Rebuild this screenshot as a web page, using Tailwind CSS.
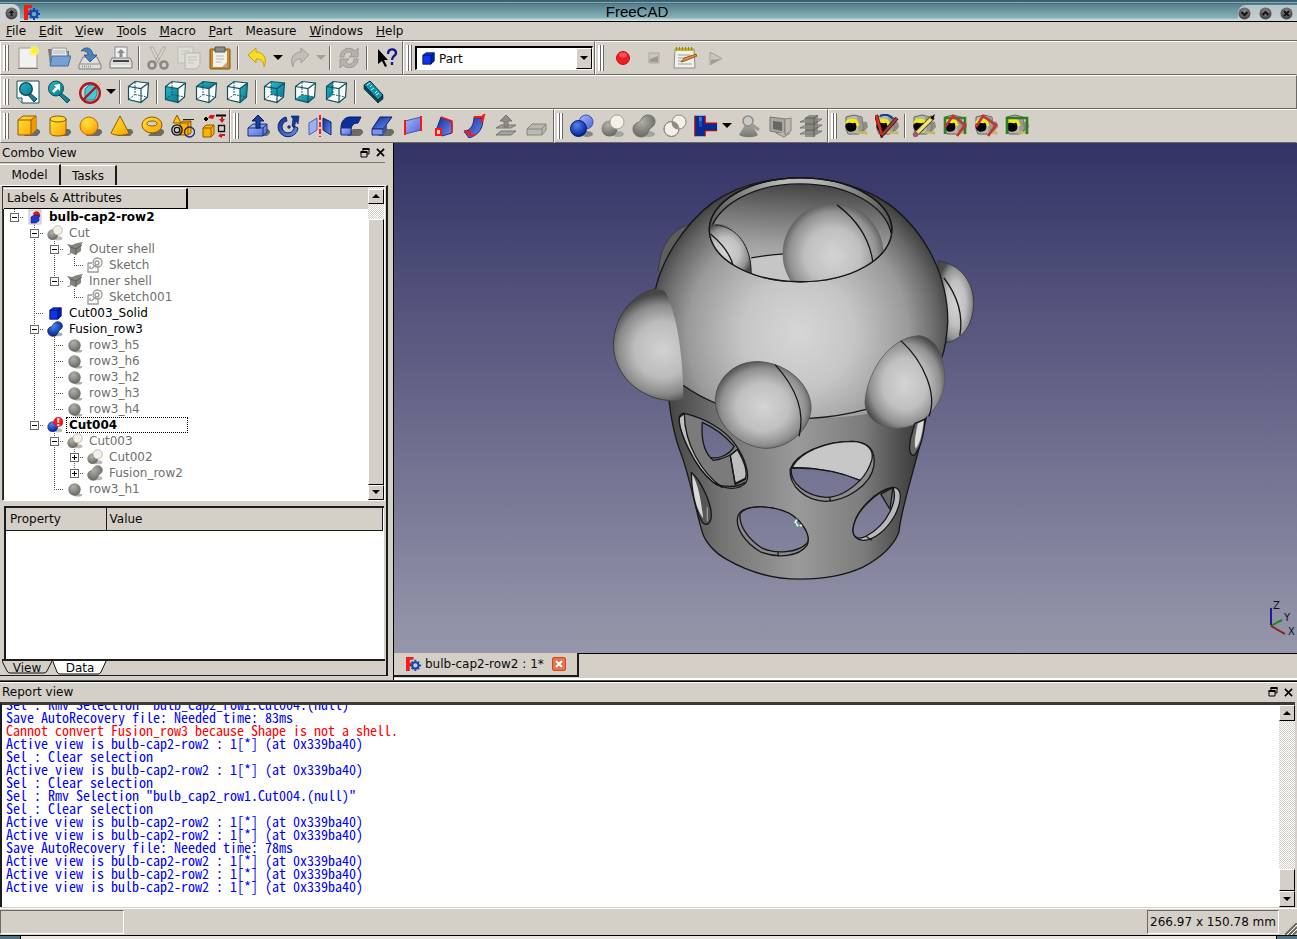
<!DOCTYPE html>
<html lang="en">
<head>
<meta charset="utf-8">
<title>FreeCAD</title>
<script src="https://cdn.jsdelivr.net/npm/@tailwindcss/browser@4"></script>
</head>
<body class="flex h-screen flex-col overflow-hidden bg-[#d4d0c8] font-['DejaVu_Sans',sans-serif] text-[12px] leading-4 text-[#0a0a0a]">

<svg class="absolute size-0" aria-hidden="true">
  <defs>
    <linearGradient id="gY" x1="0" y1="0" x2="1" y2="1"><stop offset="0" stop-color="#ffe43a"/><stop offset="1" stop-color="#ffa000"/></linearGradient>
    <linearGradient id="gT" x1="0" y1="0" x2="1" y2="1"><stop offset="0" stop-color="#2cb5c6"/><stop offset="1" stop-color="#077a90"/></linearGradient>
    <linearGradient id="gB" x1="0" y1="0" x2="1" y2="1"><stop offset="0" stop-color="#0d2a9a"/><stop offset="1" stop-color="#6f8ff0"/></linearGradient>
    <linearGradient id="gL" x1="0" y1="0" x2="1" y2="1"><stop offset="0" stop-color="#a9baf8"/><stop offset="1" stop-color="#4a66dc"/></linearGradient>
    <linearGradient id="gG" x1="0" y1="0" x2="0" y2="1"><stop offset="0" stop-color="#aaa9a4"/><stop offset="1" stop-color="#777670"/></linearGradient>
    <radialGradient id="rB" cx=".4" cy=".3" r=".7"><stop offset="0" stop-color="#4f86ee"/><stop offset="1" stop-color="#04208f"/></radialGradient>
    <radialGradient id="rG" cx=".4" cy=".3" r=".7"><stop offset="0" stop-color="#b2b0aa"/><stop offset="1" stop-color="#696863"/></radialGradient>
    <radialGradient id="rY" cx=".4" cy=".3" r=".7"><stop offset="0" stop-color="#ffe640"/><stop offset="1" stop-color="#ff9d00"/></radialGradient>
    <radialGradient id="rW" cx=".5" cy=".35" r=".6"><stop offset="0" stop-color="#8d8d8d"/><stop offset="1" stop-color="#454545"/></radialGradient>
  </defs>
  <symbol id="logo" viewBox="0 0 16 16"><path d="M0 0h8v3H4v3h3v3H4v6H0z" fill="#fb1a10"/><g fill="none" stroke="#0f46b8"><circle cx="10" cy="9" r="3.4" stroke-width="2.2"/><path d="M10 3v2M10 13v2M4 9h2M14 9h2M6 5l1 1M13 12l1 1M14 5l-1 1M7 12l-1 1" stroke-width="2"/></g></symbol>
  <symbol id="new" viewBox="0 0 24 24"><path d="M3 2h18v20H3z" fill="#f1f1ef" stroke="#9b9a96"/><path d="M2 22.500h20" stroke="#777"/><circle cx="18" cy="5" r="5" fill="#fbf27a" opacity=".8"/><circle cx="18" cy="5" r="2.500" fill="#fff700"/></symbol>
  <symbol id="open" viewBox="0 0 24 24"><path d="M1 3h9l1 2h11v14H3z" fill="#777875"/><path d="M5 2h14l2 10H4z" fill="#e9e9e7" stroke="#9a9a98"/><path d="M6 5h12M6 7h12" stroke="#b7b7b5"/><path d="M5 10h19l-3 10H3z" fill="#78a0d2" stroke="#3f6ba8"/></symbol>
  <symbol id="save" viewBox="0 0 24 24"><path d="M5 11h14l4 8v4H1v-4z" fill="#dedede" stroke="#7c7c7c"/><path d="M1.500 18h21" stroke="#8c8c8c"/><path d="M4 20.500h9" stroke="#999" stroke-width="2" stroke-dasharray="1 1"/><path d="M3 5c4-5 11-4 12 4h4l-7 7-6-7h4c0-3-3-5-7-4z" fill="#4d82b4" stroke="#2f608f"/></symbol>
  <symbol id="print" viewBox="0 0 24 24"><path d="M6 1h12v12H6z" fill="#f2f2f2" stroke="#8a8a8a"/><path d="M12 3l4 4h-2.500v4h-3V7H8z" fill="#8c8c8c"/><path d="M3 12h18l2 4v6H1v-6z" fill="#dadada" stroke="#7a7a7a"/><path d="M4 15h16" stroke="#444" stroke-width="2"/><path d="M2 20h20" stroke="#fff"/></symbol>
  <symbol id="cut" viewBox="0 0 24 24"><path d="M4 1l3 0 8 16-3 0zM20 1l-3 0-9 16 3 0z" fill="#d6d5d0" stroke="#a3a29c" stroke-width=".8"/><g fill="none" stroke="#8a8984" stroke-width="2.600"><circle cx="6" cy="19" r="3.500"/><circle cx="18" cy="19" r="3.500"/></g></symbol>
  <symbol id="copy" viewBox="0 0 24 24" opacity=".6"><path d="M1 1h15v16H1z" fill="#e6e5e1" stroke="#b1b0ab"/><path d="M8 7h15v12l-4 4H8z" fill="#e9e8e5" stroke="#a3a29e"/><path d="M11 11h9M11 14h9M11 17h6M4 5h9M4 8h4" stroke="#b8b7b2"/></symbol>
  <symbol id="paste" viewBox="0 0 24 24"><rect x="2" y="3" width="20" height="20" rx="1" fill="#c98a2b" stroke="#83540f"/><path d="M5 5h14v16H5z" fill="#f0f0ee"/><path d="M7 1h10v5H7z" fill="#8b8d89" stroke="#555"/><path d="M8 10h8M8 13h8M8 16h5" stroke="#b9b9b7"/><path d="M19 16l-5 5h5z" fill="#aaa"/></symbol>
  <symbol id="undo" viewBox="0 0 24 24"><path d="M3 9l8-7v4c7 0 12 6 8 15 0-6-3-8-8-8v4z" fill="#f6dc2b" stroke="#caa300"/></symbol>
  <symbol id="redo" viewBox="0 0 24 24"><path d="M21 9l-8-7v4C6 6 1 12 5 21c0-6 3-8 8-8v4z" fill="#c0bfba" stroke="#9f9e99"/></symbol>
  <symbol id="refresh" viewBox="0 0 24 24" opacity=".65"><path d="M3 11c0-9 11-11 15-6l3-3v9h-9l3-3c-3-4-8-2-8 3zM21 13c0 9-11 11-15 6l-3 3v-9h9l-3 3c3 4 8 2 8-3z" fill="#a5a49f" stroke="#7f7e79"/></symbol>
  <symbol id="help" viewBox="0 0 24 24"><path d="M4 3v15l4-3 3 6 2-1-3-6h4z" fill="#000"/><path d="M14 8c0-6 8-6 8-1 0 3-4 3-4 7M18 16v3" fill="none" stroke="#14148c" stroke-width="2.400"/></symbol>
  <symbol id="part" viewBox="0 0 16 16"><path d="M1 4l4-3h10v10l-4 4H1z" fill="#0a34f0" stroke="#000a50"/><path d="M11 4v11l4-4V1z" fill="#001fb0"/><path d="M1 4h10l4-3M11 4v11" fill="none" stroke="#000a50"/></symbol>
  <symbol id="rec" viewBox="0 0 24 24"><circle cx="12" cy="12" r="6.500" fill="#ee1c20" stroke="#c81010"/><ellipse cx="12" cy="9" rx="4" ry="2.500" fill="#ff7a78" opacity=".6"/></symbol>
  <symbol id="stop" viewBox="0 0 24 24"><path d="M7 7h10v10H7z" fill="#c9c6bf" stroke="#aaa8a2"/><path d="M8 13l8-3v6H8z" fill="#9b9994"/></symbol>
  <symbol id="edit" viewBox="0 0 24 24"><path d="M2 3h19l1 19H1z" fill="#f0f0ec" stroke="#8d8d8a"/><path d="M2 2h19v3H2z" fill="#c5b52c"/><path d="M3 2.500h18" stroke="#8e8224" stroke-width="3" stroke-dasharray="1 2"/><path d="M5 9h12M5 12h10M5 15h5M5 18h14" stroke="#9e9e9e"/><path d="M8 16l3-4 12-4 1 2-12 5z" fill="#e88b2a" stroke="#6d3d10" stroke-width=".7"/></symbol>
  <symbol id="play" viewBox="0 0 24 24"><path d="M6 6l12 6.500L6 19z" fill="#c9c6bf" stroke="#a3a19b"/><path d="M7 14l9-1-9 5z" fill="#9b9994"/></symbol>

  <symbol id="fit" viewBox="0 0 24 24"><path d="M1 1h22v22H6l-5-5z" fill="#fff" stroke="#11505c"/><path d="M1 18h5v5" fill="#d7e4e6" stroke="#11505c"/><path d="M14 13l7 6-3 3-6-7z" fill="#1a8296" stroke="#0c4652"/><circle cx="10" cy="9" r="6.300" fill="url(#gT)" stroke="#0c4652" stroke-width="1.300"/></symbol>
  <symbol id="fitsel" viewBox="0 0 24 24"><path d="M14 13l9 7-3 3-8-8z" fill="#1a8296" stroke="#0c4652"/><circle cx="9" cy="8.500" r="7.500" fill="url(#gT)" stroke="#0c4652"/><path d="M13 4v7l-2-2-4 4-2-2 4-4-2-2z" fill="#fff"/></symbol>
  <symbol id="nodraw" viewBox="0 0 24 24"><path d="M7 9l4-4h8v10l-3 5H7z" fill="#41cdd8" stroke="#16808c"/><path d="M18 4l3-3M20 7l3-4" stroke="#e0b040"/><circle cx="12" cy="13" r="9.800" fill="none" stroke="#b41620" stroke-width="2.400"/><path d="M5 20L19 6" stroke="#b41620" stroke-width="2.400"/></symbol>
  <symbol id="cube" viewBox="0 0 24 24"><path d="M1.500 6.500L8 1.500 21.500 3 20.500 17 14 22.500 1.500 19.500zM1.500 6.500L14 8.500 21.500 3M14 8.500v14" fill="none" stroke="#10525e" stroke-width="1.200"/><path d="M8 2v12.500L1.500 19.500M8 14.500L20.500 17" fill="none" stroke="#10525e" stroke-width=".9" stroke-dasharray="2 1"/></symbol>
  <symbol id="cubebg" viewBox="0 0 24 24"><path d="M1.500 6.500L8 1.500 21.500 3 20.500 17 14 22.500 1.500 19.500z" fill="#fcfefe"/></symbol>
  <symbol id="ruler" viewBox="0 0 24 24"><path d="M2 5l6-4 13 14-5 5z" fill="#1595ab" stroke="#0a2d38"/><path d="M2 5v4l14 14v-3zM16 23l5-4v-4l-5 5z" fill="#0b4450" stroke="#0a2d38" stroke-width=".6"/><path d="M8 3l-3 2M10 5L8 7M12 8l-3 2M15 11l-2 2M17 13l-3 2" stroke="#c8f4fa"/></symbol>

  <symbol id="shade" viewBox="0 0 24 24"><path d="M8 22l6-7 8 0 3 3-4 4z" fill="#4b4a46" opacity=".75"/></symbol>
  <symbol id="box" viewBox="0 0 24 24"><use href="#shade"/><path d="M2 6l5-4h13v14l-5 5H2z" fill="url(#gY)" stroke="#8a5c00"/><path d="M15 6l5-4v14l-5 5z" fill="#f09a00"/><path d="M2 6h13v15M15 6l5-4" fill="none" stroke="#8a5c00"/></symbol>
  <symbol id="cyl" viewBox="0 0 24 24"><use href="#shade"/><path d="M3 5v14c0 4 16 4 16 0V5z" fill="url(#gY)" stroke="#8a5c00"/><ellipse cx="11" cy="5" rx="8" ry="3" fill="#ffd930" stroke="#8a5c00"/></symbol>
  <symbol id="sph" viewBox="0 0 24 24"><use href="#shade"/><circle cx="11" cy="12" r="9" fill="url(#rY)" stroke="#b87300"/></symbol>
  <symbol id="cone" viewBox="0 0 24 24"><use href="#shade"/><path d="M11 2l9 17c-3 3-15 3-18 0z" fill="url(#gY)" stroke="#8a5c00"/></symbol>
  <symbol id="torus" viewBox="0 0 24 24"><use href="#shade"/><ellipse cx="12" cy="11" rx="10" ry="8" fill="url(#gY)" stroke="#8a5c00"/><ellipse cx="12" cy="9.500" rx="5" ry="2.500" fill="#d4d0c8" stroke="#8a5c00"/></symbol>
  <symbol id="prim" viewBox="0 0 24 24"><path d="M6 1l4 8H2z" fill="#ffc200" stroke="#8a5c00"/><path d="M12 5.500h11" stroke="#222"/><path d="M9 9l3-2h8v12l-3 2H9z" fill="#ffb200" stroke="#8a5c00"/><path d="M17 9v12M9 9h8l3-2" stroke="#8a5c00" fill="none"/><g fill="none" stroke="#111" stroke-width="1.300"><circle cx="6" cy="16" r="5.200"/><circle cx="6" cy="16" r="2.700"/></g><circle cx="18.500" cy="18" r="5" fill="none" stroke="#1d2a78" stroke-width="1.300"/></symbol>
  <symbol id="shapeb" viewBox="0 0 24 24"><path d="M1 14l3-3h8v9l-3 3H1z" fill="#ffb200" stroke="#8a5c00"/><path d="M1 14h8v9M9 14l3-3" fill="none" stroke="#8a5c00"/><path d="M2 5h4M4 3v4" stroke="#000" stroke-width="2"/><path d="M6 4l2-3 5 0-2 4zM19 3v2h-2l3 4 3-4h-2V3z" fill="#d91420"/><path d="M14 1.500h10" stroke="#000" stroke-width="2"/><path d="M16.500 11.500h6v6h-6z" fill="none" stroke="#111" stroke-width="1.300"/><path d="M23 20h-4v-1l-3 3 4 2v-2h3z" fill="#d91420"/></symbol>

  <symbol id="extr" viewBox="0 0 24 24"><use href="#shade"/><path d="M2 14l5-4h14v8l-4 4H2z" fill="url(#gL)" stroke="#16307c"/><path d="M2 14h15v8M17 14l4-4" fill="none" stroke="#16307c"/><path d="M12 1l6 6h-4v7h-4V7H6z" fill="#1b3f9e" stroke="#0b1d5c"/></symbol>
  <symbol id="rev" viewBox="0 0 24 24"><path d="M9 3a10 10 0 1 0 12 11l-4-2a6 6 0 1 1-7-5z" fill="url(#gB)" stroke="#10226a"/><path d="M14 2l8 0-1 8-2-3-2 7-2-2 1-7z" fill="#12379c" stroke="#10226a" stroke-width=".7"/><circle cx="12" cy="13" r="1.700" fill="#12307c"/></symbol>
  <symbol id="mirror" viewBox="0 0 24 24"><path d="M1 9l8-5v12l-8 5z" fill="#9db0f2" stroke="#4a5fb0"/><path d="M15 4l8 4v13l-8-5z" fill="url(#gB)" stroke="#10226a"/><path d="M12 1v22" stroke="#ff1a1a" stroke-width="2" stroke-dasharray="5 2"/></symbol>
  <symbol id="fillet" viewBox="0 0 24 24"><use href="#shade"/><path d="M2 14c0-7 4-11 9-11h11l-3 6c-5 0-7 3-7 7v4H2z" fill="#0c2f9c" stroke="#081b60"/><path d="M2 14h10v7H2z" fill="url(#gL)" stroke="#16307c"/></symbol>
  <symbol id="chamf" viewBox="0 0 24 24"><use href="#shade"/><path d="M2 15L10 3h12l-9 12z" fill="url(#gB)" stroke="#081b60"/><path d="M2 15h11v6H2z" fill="#7d92ec" stroke="#16307c"/><path d="M13 15l4-5v6l-4 5z" fill="#43528f"/></symbol>
  <symbol id="ruled" viewBox="0 0 24 24"><path d="M4 7l16-4v13L4 20z" fill="url(#gL)" stroke="#4757a8"/><path d="M4 6v15M20 2v15" stroke="#ff1414" stroke-width="2"/></symbol>
  <symbol id="loft" viewBox="0 0 24 24"><path d="M5 14L9 3l11 5v11l-10 3z" fill="url(#gB)" stroke="#1c2a80"/><path d="M9 3l11 4v12" fill="none" stroke="#ff1414" stroke-width="1.500"/><path d="M4 15h5v6H4z" fill="#ffc8c8" stroke="#ff1414" stroke-width="2"/></symbol>
  <symbol id="sweep" viewBox="0 0 24 24"><path d="M1 17c7 0 10-7 10-14l9 2c0 9-4 16-14 19z" fill="url(#gB)" stroke="#1c2a80"/><path d="M1 18h6M7 16v5h5M11 3h8l3-3M18 9l3-7" fill="none" stroke="#ff1414" stroke-width="2"/></symbol>
  <symbol id="offs" viewBox="0 0 24 24"><path d="M2 21l5-4h15l-5 4zM2 14l5-3h15l-5 3z" fill="#a5a49f" stroke="#75746f"/><path d="M12 1l6 6h-4v6h-4V7H6z" fill="#8d8c87" stroke="#75746f"/></symbol>
  <symbol id="thick" viewBox="0 0 24 24"><path d="M2 15l5-5h14v6l-4 5H2z" fill="#b9b8b3" stroke="#85847f"/><path d="M2 15h15v6M17 15l4-5" fill="none" stroke="#85847f"/></symbol>

  <symbol id="bool" viewBox="0 0 24 24"><ellipse cx="17" cy="20" rx="6" ry="3" fill="#555" opacity=".6"/><circle cx="16" cy="8" r="7" fill="url(#gL)" stroke="#3450b8"/><circle cx="8.500" cy="14.500" r="8" fill="url(#rB)" stroke="#061a70"/></symbol>
  <symbol id="bcut" viewBox="0 0 24 24"><ellipse cx="17" cy="20" rx="6" ry="3" fill="#777" opacity=".5"/><circle cx="8.500" cy="14.500" r="8" fill="url(#rG)"/><circle cx="16" cy="8" r="7" fill="#f4efe7" stroke="#a5a19a"/></symbol>
  <symbol id="bcutb" viewBox="0 0 24 24"><ellipse cx="17" cy="20" rx="6" ry="3" fill="#777" opacity=".5"/><circle cx="8.500" cy="14.500" r="8" fill="url(#rB)"/><circle cx="17" cy="7.500" r="7.500" fill="#f51620"/><path d="M17 2v6.500M17 10.500v3" stroke="#fff" stroke-width="3"/></symbol>
  <symbol id="fus" viewBox="0 0 24 24"><ellipse cx="17" cy="20" rx="6" ry="3" fill="#777" opacity=".5"/><path d="M1 15c0-5 4-6 6-7s3-7 9-7c8 0 9 9 4 12s-3 10-11 10c-5 0-8-4-8-8z" fill="url(#rG)" stroke="#73726d"/></symbol>
  <symbol id="fusb" viewBox="0 0 24 24"><ellipse cx="17" cy="20" rx="6" ry="3" fill="#777" opacity=".6"/><path d="M1 15c0-5 4-6 6-7s3-7 9-7c8 0 9 9 4 12s-3 10-11 10c-5 0-8-4-8-8z" fill="url(#rB)" stroke="#061a70"/></symbol>
  <symbol id="inter" viewBox="0 0 24 24"><g fill="#f4efe7" stroke="#8c8a84"><circle cx="8.500" cy="15" r="7.500"/><circle cx="16" cy="8" r="7"/></g><path d="M9 8c3-1 7 3 6 7-3 1-7-3-6-7z" fill="#8c8b85"/><circle cx="8.500" cy="15" r="7.500" fill="none" stroke="#8c8a84"/></symbol>
  <symbol id="tee" viewBox="0 0 26 24"><path d="M1 1h11v8h13v8H12v6H1z" fill="#062b93"/><path d="M1 1v22M12 1v8h13M12 23v-6h13" fill="none" stroke="#a50d16" stroke-width="1.500"/><path d="M7 2v5" stroke="#3a78dc" stroke-width="3"/><path d="M7 7v6" stroke="#1c4cb4" stroke-width="3"/></symbol>
  <symbol id="check" viewBox="0 0 24 24"><path d="M9 9L2 21c5 3 15 3 19 0L14 9z" fill="url(#gG)"/><circle cx="11" cy="7" r="5" fill="#cbcac6" stroke="#8b8a86" stroke-width="1.500"/><path d="M14 10l8 6" stroke="#9b9a95" stroke-width="3"/></symbol>
  <symbol id="defeat" viewBox="0 0 24 24"><path d="M2 3l15 2v15L2 17z" fill="#a8a7a2" stroke="#7a7974"/><path d="M5 7l9 1v9l-9-2z" fill="#686762"/><path d="M17 5l6-1v13l-6 4zM8 19l8 4 6-4" fill="#bab9b4" stroke="#85847f"/></symbol>
  <symbol id="sect" viewBox="0 0 24 24"><path d="M1 8l6-3h16l-5 3zM1 14l6-3h16l-5 3zM1 20l6-3h16l-5 3z" fill="#b5b4af" stroke="#75746f"/><path d="M6 4l4-3h9v18l-4 4H6z" fill="#85847f" opacity=".85"/><path d="M6 4h9v19M15 4l4-3M6 10h9l4-3M6 16h9l4-3" fill="none" stroke="#5c5b57"/></symbol>
  <symbol id="tape" viewBox="0 0 24 24"><path d="M15 7l8 1 1 5-6 7z" fill="#55544f" opacity=".55"/><path d="M2 3l8-2 8 2 1 13-4 4H4L2 15z" fill="#b8b7b2" stroke="#63625e"/><path d="M13 2l5 1 1 12-4 5z" fill="#9a9994"/><ellipse cx="8" cy="8.500" rx="6.500" ry="3.800" fill="#f1ec12"/><path d="M2 10c3-3 6 0 8-1s3 3 2 6-7 4-9 1-2-4-1-6z" fill="#050505"/><path d="M13 12l2-2" stroke="#f1ec12" stroke-width="2"/><path d="M13 18.500h9v2" fill="none" stroke="#c5b660" stroke-width="2.500"/></symbol>
  <symbol id="tang" viewBox="0 0 24 24"><use href="#tape"/><path d="M5 2c4-2 9-2 13 3" fill="none" stroke="#123f9c" stroke-width="2"/><path d="M1 1l6 20L22 4" fill="none" stroke="#4a1414" stroke-width="4"/><path d="M1 1l6 20" stroke="#e02a20" stroke-width="2.500"/><path d="M7 21L22 4" stroke="#a04038" stroke-width="2"/></symbol>
  <symbol id="tclr" viewBox="0 0 24 24"><use href="#tape"/><path d="M4 20L21 3" stroke="#4a4520" stroke-width="5"/><path d="M4 20L20 4" stroke="#f3e479" stroke-width="3.200"/><circle cx="3.500" cy="20.500" r="2.700" fill="#a05a60"/><path d="M18 4l5-4-2 6z" fill="#000"/></symbol>
  <symbol id="tall" viewBox="0 0 24 24"><use href="#tape"/><path d="M2 20V4h20v16" fill="none" stroke="#2e8228" stroke-width="2.600"/><path d="M2 13L10 2l12 9-8 11" fill="none" stroke="#c2343a" stroke-width="2.600"/></symbol>
  <symbol id="t3d" viewBox="0 0 24 24"><use href="#tape"/><path d="M2 13L9 2l13 9-8 11" fill="none" stroke="#c2343a" stroke-width="2.600"/></symbol>
  <symbol id="tdel" viewBox="0 0 24 24"><use href="#tape"/><path d="M2 20V4h20v16" fill="none" stroke="#2a7d26" stroke-width="2.600"/></symbol>

  <symbol id="doc" viewBox="0 0 16 16"><path d="M2 1h12v14H2z" fill="#e6e6ee" stroke="#c0c0c8"/><path d="M6 5c1-4 8-4 7 3H9z" fill="#e01818"/><path d="M4 8l3-2h5v6l-3 2H4z" fill="#2438c8" stroke="#101a70" stroke-width=".6"/></symbol>
  <symbol id="pad" viewBox="0 0 16 16"><path d="M0 14l3-2V7L0 3l5 1 5-2 6-1-2 3v6l-6 4-4-2-2 2z" fill="#84837e"/><path d="M3 6l6 2 6-4M9 8v6" fill="none" stroke="#5f5e5a"/></symbol>
  <symbol id="sketch" viewBox="0 0 16 16"><g fill="none" stroke="#9a9994" stroke-width="1.300"><path d="M1 6h4M1 6v9h10v-5"/><circle cx="10.500" cy="5.500" r="4.500"/><circle cx="10" cy="6" r="2"/><path d="M3 9v3M4 12l5-4"/></g></symbol>
  <symbol id="ball" viewBox="0 0 16 16"><ellipse cx="11" cy="14" rx="4" ry="1.500" fill="#888" opacity=".7"/><circle cx="7.500" cy="8.500" r="6.200" fill="url(#rG)"/></symbol>
  <symbol id="float" viewBox="0 0 10 10"><path d="M3 1h6v5H7M3 1v2M1 4h6v5H1z" fill="none" stroke="#000"/><path d="M2.500 1h7M.5 4h7" stroke="#000" stroke-width="2"/></symbol>
  <symbol id="x" viewBox="0 0 10 10"><path d="M1 1l8 8M9 1L1 9" stroke="#000" stroke-width="1.800"/></symbol>
  <symbol id="dn" viewBox="0 0 10 6"><path d="M0 0h10L5 5z"/></symbol>
  <symbol id="up" viewBox="0 0 10 6"><path d="M0 5h10L5 0z"/></symbol>
</svg>

<header class="relative flex h-[22px] shrink-0 items-center justify-between border-y border-t-[#3a5d6d] border-b-black bg-[linear-gradient(#3f6676_0_1px,#86a7b2_1px_2px,#44707f_2px_3px,#557f8d_3px,#87b4ba_17px,#bcd0d2_18px,#dfe6e6_20px)]">
  <div class="flex h-full items-center pt-1">
    <button aria-label="Window menu" class="flex h-[18px] w-5 items-center justify-end rounded-tr-lg bg-[#cfd3d4] pr-[2px]"><svg class="size-[13px]" viewBox="0 0 13 13"><circle cx="6.500" cy="6.500" r="6" fill="url(#rW)"/><path d="M6.500 3l3 3h-2v3h-2V6h-2z" fill="#111"/></svg></button>
    <svg class="ml-1 size-4"><use href="#logo"/></svg>
  </div>
  <h1 class="absolute inset-x-0 top-[3px] pr-[23px] text-center font-['Liberation_Sans',sans-serif] text-[15px] leading-4 text-black">FreeCAD</h1>
  <div class="relative flex h-full items-end">
    <div class="flex h-4 items-center gap-2 rounded-tl-lg bg-[#cfd3d4]/80 pr-1">
      <button aria-label="Minimize"><svg class="size-[13px]" viewBox="0 0 13 13"><circle cx="6.500" cy="6.500" r="6" fill="url(#rW)"/><path d="M3.500 5l3 3 3-3" fill="none" stroke="#111" stroke-width="2"/></svg></button>
      <button aria-label="Maximize"><svg class="size-[13px]" viewBox="0 0 13 13"><circle cx="6.500" cy="6.500" r="6" fill="url(#rW)"/><path d="M3.500 8l3-3 3 3" fill="none" stroke="#111" stroke-width="2"/></svg></button>
      <button aria-label="Close"><svg class="size-[13px]" viewBox="0 0 13 13"><circle cx="6.500" cy="6.500" r="6" fill="url(#rW)"/><path d="M4 4l5 5M9 4L4 9" fill="none" stroke="#111" stroke-width="2"/></svg></button>
    </div>
  </div>
</header>

<nav class="flex h-[19px] shrink-0 items-center gap-[13px] border-b border-[#6b6965] pl-[6px]">
  <button><u>F</u>ile</button><button><u>E</u>dit</button><button><u>V</u>iew</button><button><u>T</u>ools</button><button><u>M</u>acro</button><button><u>P</u>art</button><button>Measure</button><button><u>W</u>indows</button><button><u>H</u>elp</button>
</nav>

<!-- Toolbars: markup for each row is filled from the lists in the script below -->
<div id="row1" class="flex h-[34px] shrink-0"></div>
<div id="row2" class="flex h-[34px] shrink-0"></div>
<div id="row3" class="flex h-[34px] shrink-0"></div>

<main class="flex min-h-0 flex-1 border-b border-[#55534f]">
  <section class="flex w-[389px] shrink-0 flex-col" aria-label="Combo View">
    <div class="mr-1 flex h-5 shrink-0 items-center justify-between border-b border-[#77756f] pl-[2px]">
      <h2>Combo View</h2>
      <div class="flex gap-[6px]"><button aria-label="Float"><svg class="size-[10px]"><use href="#float"/></svg></button><button aria-label="Close"><svg class="size-[9px]"><use href="#x"/></svg></button></div>
    </div>
    <div class="flex h-[22px] shrink-0 items-end" role="tablist">
      <button role="tab" class="h-[21px] w-[61px] border-r-2 border-t border-r-[#1c1c1c] border-t-white">Model</button>
      <button role="tab" class="h-5 w-[56px] border-r-2 border-t border-r-[#1c1c1c] border-t-white">Tasks</button>
    </div>
    <div class="mb-[4px] mr-px flex min-h-0 flex-1 flex-col border-b border-r-2 border-t border-b-[#1c1c1c] border-r-[#1c1c1c] border-t-white pb-4 pr-px">
      <div class="ml-[2px] flex h-[315px] shrink-0 border border-b-white border-l-[#3a3a3a] border-r-white border-t-black bg-white shadow-[inset_1px_1px_0_#222]">
        <div class="min-w-0 flex-1">
          <div class="flex h-[22px] bg-[#d4d0c8] pl-px pt-px"><div class="w-[184px] border-b border-r-2 border-t border-black border-t-white pl-[3px] leading-[19px]">Labels &amp; Attributes</div></div>
          <div id="tree" role="tree" class="pl-px"></div>
        </div>
        <div class="flex w-4 shrink-0 flex-col bg-[repeating-conic-gradient(#fff_0_25%,#d4d0c8_0_50%)] bg-[length:2px_2px] pt-[2px]">
          <button aria-label="Scroll up" class="grid h-[15px] place-items-center border border-b-black border-l-white border-r-black border-t-white bg-[#d4d0c8]"><svg class="h-[5px] w-2"><use href="#up"/></svg></button>
          <div class="mt-[15px] flex-1 border border-b-black border-l-white border-r-black border-t-white bg-[#d4d0c8]"></div>
          <button aria-label="Scroll down" class="grid h-[15px] place-items-center border border-b-black border-l-white border-r-black border-t-white bg-[#d4d0c8]"><svg class="h-[5px] w-2"><use href="#dn"/></svg></button>
        </div>
      </div>
      <div class="ml-1 mr-[1px] mt-[5px] flex min-h-0 flex-1 flex-col border-l-2 border-t-2 border-[#1c1c1c] bg-white pr-px">
        <table class="w-full text-left"><thead><tr class="h-[22px] bg-[#d4d0c8]">
          <th class="w-[100px] border-b border-r border-[#1c1c1c] pl-1 font-normal">Property</th><th class="border-b border-r border-[#1c1c1c] pl-[3px] font-normal">Value</th></tr></thead><tbody></tbody></table>
      </div>
      <div class="relative -mb-4 ml-[2px] flex h-4 shrink-0 border-t-2 border-[#1c1c1c]" role="tablist">
        <button role="tab" class="relative h-[13px] w-[50px] leading-[10px]"><svg class="absolute inset-0" width="50" height="14" viewBox="0 0 50 14"><path d="M0 0l5 10q1 2 3 2h34q2 0 3-2l5-10" fill="none" stroke="#111"/></svg>View</button>
        <button role="tab" class="relative h-[14px] w-[56px] leading-3"><svg class="absolute inset-0" width="56" height="14" viewBox="0 0 56 14"><path d="M0-2l5 13q1 2 3 2h38q2 0 3-2l6-13" fill="#fff" stroke="#111"/></svg><span class="relative">Data</span></button>
      </div>
    </div>
  </section>

  <section class="ml-1 flex min-w-0 flex-1 flex-col border-l border-black" aria-label="3D view">
    <div class="relative min-h-0 flex-1 bg-[linear-gradient(#333366,#9797ab)]">
      <svg class="absolute inset-0 h-full w-full" viewBox="394 143 903 511" role="img" aria-label="Bulb cap model">
        <defs>
          <radialGradient id="s" gradientUnits="userSpaceOnUse" cx="798" cy="334" r="158"><stop offset="0" stop-color="#d6d6d6"/><stop offset=".35" stop-color="#c6c6c6"/><stop offset=".7" stop-color="#9a9a9a"/><stop offset=".88" stop-color="#686868"/><stop offset="1" stop-color="#3e3e3e"/></radialGradient>
          <radialGradient id="b" cx=".5" cy=".52" r=".55"><stop offset="0" stop-color="#d4d4d4"/><stop offset=".5" stop-color="#c0c0c0"/><stop offset=".8" stop-color="#909090"/><stop offset="1" stop-color="#4a4a4a"/></radialGradient>
          <radialGradient id="bl" gradientUnits="userSpaceOnUse" cx="662" cy="350" r="56"><stop offset="0" stop-color="#d2d2d2"/><stop offset=".5" stop-color="#bcbcbc"/><stop offset=".8" stop-color="#8a8a8a"/><stop offset="1" stop-color="#474747"/></radialGradient>
          <linearGradient id="c" gradientUnits="userSpaceOnUse" x1="670" x2="926" y1="0" y2="0"><stop offset="0" stop-color="#464646"/><stop offset=".2" stop-color="#747474"/><stop offset=".5" stop-color="#9a9a9a"/><stop offset=".75" stop-color="#7d7d7d"/><stop offset=".92" stop-color="#484848"/><stop offset="1" stop-color="#333"/></linearGradient>
          <linearGradient id="in" x1=".5" y1="0" x2=".4" y2="1"><stop offset="0" stop-color="#444"/><stop offset=".25" stop-color="#6c6c6c"/><stop offset=".6" stop-color="#a0a0a0"/><stop offset="1" stop-color="#c6c6c6"/></linearGradient>
          <linearGradient id="rim"><stop offset="0" stop-color="#5a5a5a"/><stop offset=".4" stop-color="#b8b8b8"/><stop offset=".6" stop-color="#b4b4b4"/><stop offset="1" stop-color="#555"/></linearGradient>
          <linearGradient id="hole" gradientUnits="userSpaceOnUse" x1="0" x2="0" y1="143" y2="654"><stop offset="0" stop-color="#333366"/><stop offset="1" stop-color="#9797ab"/></linearGradient>
          <clipPath id="open-c"><ellipse cx="800.5" cy="230" rx="91" ry="52"/></clipPath>
        </defs>
        <g stroke="#161616" stroke-width="1.300" stroke-linejoin="round">
          <path d="M658 272C659 246 672 230 690 224L700 280z" fill="#5e5e5e" stroke="none"/>
          <path d="M658 272C659 246 672 230 688 225" fill="none" stroke="#333" stroke-width=".8"/>
          <path d="M938 261C960 264 974 282 974 304 973 326 962 341 946 343z" fill="url(#b)" stroke="#333" stroke-width=".8"/>
          <path d="M944 278C957 295 964 314 960 336" fill="none"/>
          <path d="M668 395C671 425 675 440 681 455 690 480 696 513 702 533 705 543 715 554 726 560 750 574 775 580 800 580 828 580 850 574 863 568 880 559 893 548 899 533 902 503 918 462 927 415L900 370 690 370z" fill="url(#c)"/>
          <path d="M655 290C661 262 682 226 712 203 736 186 768 178 801 178 834 178 866 188 890 205 925 232 948 275 948 322 947 345 940 372 926 396 900 411 856 419 801 419 746 416 705 404 680 383 660 360 650 322 655 290z" fill="url(#s)" stroke="none"/>
          <path d="M712 203C736 186 768 178 801 178 834 178 866 188 890 205 925 232 948 275 948 322 947 337 945 350 942 358M655 290C661 262 682 226 712 203M683 386C693 393 704 399 716 404M809 419C830 418 848 415 866 410" fill="none"/>
          <ellipse cx="800.5" cy="230" rx="91.500" ry="52" fill="url(#rim)"/>
          <g clip-path="url(#open-c)">
            <path d="M709 236C714 206 752 184 800 184 848 184 886 205 892 236V285H709z" fill="url(#in)"/>
            <path d="M751 258C762 256 772 255 784 254L796 283 752 276z" fill="#c6c6c6" stroke="none"/>
            <path d="M751 258C762 256 772 255 784 254" fill="none"/>
            <path d="M700 228C735 214 752 243 751 276L700 278z" fill="url(#b)" stroke="none"/>
            <path d="M715 225C737 227 751 246 751 274" fill="none" stroke="#222" stroke-width="1"/>
            <path d="M710 234C722 244 730 254 733 266" fill="none"/>
            <circle cx="833" cy="254" r="50.500" fill="url(#b)" stroke="none"/>
            <path d="M837 205C857 220 870 240 873 263" fill="none"/>
          </g>
          <ellipse cx="800.5" cy="230" rx="91.500" ry="52" fill="none"/>
          <path d="M655 289C636 293 613 313 613 347 614 374 637 398 668 401 676 401 681 401 683 398 683 362 677 311 664 291z" fill="url(#bl)" stroke="none"/>
          <path d="M655 289C636 293 613 313 613 347 614 374 637 398 668 401" fill="none" stroke="#333" stroke-width=".8"/>
          <path d="M755 362C782 361 811 382 811 409 810 428 791 449 765 449 739 447 716 426 715 402 715 381 732 363 755 362z" fill="url(#b)" stroke="#444" stroke-width=".7"/>
          <path d="M775 365C796 388 805 413 799 437" fill="none"/>
          <path d="M919 336C937 338 945 357 945 380 944 404 925 428 897 429 877 428 865 417 865 402 868 370 890 338 919 336z" fill="url(#b)" stroke="#555" stroke-width=".7"/>
          <path d="M901 341C924 362 938 395 929 417" fill="none"/>
          <path d="M684 414C705 419 725 430 735 445 745 459 750 475 746 483 739 491 725 491 713 483 693 467 678 430 679 418 680 415 682 413 684 414z" fill="#7b7b7b"/>
          <path d="M684 414C684 445 702 474 722 488L713 483C693 467 678 430 679 418z" fill="#c0c0c0"/>
          <path d="M702 423C716 429 727 439 734 447 729 456 717 460 710 458 703 450 701 436 702 423z" fill="url(#hole)"/>
          <path d="M730 456L737 450C743 460 748 472 745 480L735 485z" fill="#bdbdbd"/><path d="M710 458L713 461C721 460 729 458 736 451M730 456L735 485M735 484L745 479M715 485C726 488 737 488 745 483" fill="none"/>
          <path d="M790 470C796 454 823 442 853 442 869 443 876 451 874 466 871 486 846 502 825 502 805 501 789 487 790 470z" fill="#8c8c8c"/>
          <path d="M792 468C800 453 825 442 853 442 867 443 874 450 872 460 869 470 865 476 860 481 838 472 815 468 792 468z" fill="#c7c7c7"/>
          <path d="M791 469C815 468 838 472 860 481 850 491 839 498 826 498 806 497 790 484 791 469z" fill="url(#hole)"/>
          <path d="M830 498v4" fill="none"/>
          <path d="M738 516C744 504 772 506 789 514 803 522 811 538 807 546 799 558 777 559 761 553 745 544 734 528 738 516z" fill="#8a8a8a"/>
          <path d="M740 514C748 505 772 506 789 514 803 522 811 537 807 544 797 554 775 555 762 549 748 540 738 526 740 514z" fill="url(#hole)"/><path d="M778 553v4" fill="none"/>
          <path d="M853 531C854 512 877 490 893 488 903 488 902 502 895 516 886 532 873 542 862 541 856 540 853 536 853 531z" fill="#b9b9b9"/>
          <path d="M853 531C854 512 877 492 893 488 898 500 889 525 866 537 858 541 853 538 853 531z" fill="url(#hole)"/>
          <path d="M881 495L893 488 890 510z" fill="#686868"/><path d="M866 537l6 4" fill="none"/>
          <path d="M691 473C701 482 712 505 711 518 710 525 706 527 702 523 695 511 691 490 691 473z" fill="#555"/><path d="M692 475C699 487 701 505 703 519 695 509 692 490 692 475z" fill="#d8d8d8" stroke="none"/><path d="M707 508v14" stroke="#99a"/>
          <path d="M915 424L925 420C924 437 920 450 914 456 909 456 909 448 911 438z" fill="#666"/><path d="M918 424L924 421C922 436 920 444 916 449 914 447 915 437 918 424z" fill="#dcdcdc" stroke="none"/>
        </g>
        <path d="M797 520l-2 3 3 4 4-1" fill="none" stroke="#fff" stroke-width="1.500"/><path d="M794 525h2M798 527h2M796 520h1" stroke="#14b27c" stroke-width="1.500"/>
      </svg>
      <svg class="absolute bottom-4 right-0" width="30" height="36" viewBox="0 0 30 36" aria-label="Axis cross"><path d="M4 25l7-4 4-2" fill="none" stroke="#1c8a1c" stroke-width="2"/><path d="M4 24V7" stroke="#1c1c8c" stroke-width="2"/><path d="M4 25l14 8" stroke="#8c1c1c" stroke-width="2"/><g font-family="DejaVu Sans" font-size="10" fill="#111"><text x="6" y="8">Z</text><text x="17" y="20">Y</text><text x="21" y="34">X</text></g></svg>
    </div>
    <div class="flex h-[27px] shrink-0 items-start border-b-2 border-b-white pb-px">
      <div class="flex h-6 w-[185px] items-center border-b-2 border-r-2 border-[#1c1c1c] pl-3">
        <svg class="size-[15px]"><use href="#logo"/></svg><span class="ml-1 whitespace-nowrap">bulb-cap2-row2 : 1*</span>
        <button aria-label="Close tab" class="ml-2 grid size-[14px] place-items-center rounded-[2px] border border-[#d9431c] bg-[#e2764f]"><svg class="size-2" viewBox="0 0 8 8"><path d="M1 1l6 6M7 1L1 7" stroke="#fff" stroke-width="2"/></svg></button>
      </div>
      <div class="h-full flex-1 border-t border-black"></div>
    </div>
  </section>
</main>

<section class="flex h-[227px] shrink-0 flex-col" aria-label="Report view">
  <div class="flex h-[21px] shrink-0 items-center justify-between border-t border-black pl-[2px] pr-1 shadow-[inset_0_1px_0_#fff]">
    <h2>Report view</h2>
    <div class="flex gap-[6px]"><button aria-label="Float"><svg class="size-[10px]"><use href="#float"/></svg></button><button aria-label="Close"><svg class="size-[9px]"><use href="#x"/></svg></button></div>
  </div>
  <div class="mb-px mr-[2px] flex min-h-0 flex-1 border-l-2 border-t-[3px] border-l-[#1c1c1c] border-t-[#3c3b38] bg-white">
    <div role="log" class="flex flex-1 flex-col justify-end overflow-hidden pb-[14px] pl-1 font-['Noto_Sans_Mono_CJK_JP','Noto_Sans_Mono_CJK_SC','DejaVu_Sans_Mono',monospace] text-[14px] leading-[13px] text-[#0000ff]">
      <p>Sel : Rmv Selection "bulb_cap2_row1.Cut004.(null)"</p>
      <p>Save AutoRecovery file: Needed time: 83ms</p>
      <p class="text-[#f00]">Cannot convert Fusion_row3 because Shape is not a shell.</p>
      <p>Active view is bulb-cap2-row2 : 1[*] (at 0x339ba40)</p>
      <p>Sel : Clear selection</p>
      <p>Active view is bulb-cap2-row2 : 1[*] (at 0x339ba40)</p>
      <p>Sel : Clear selection</p>
      <p>Sel : Rmv Selection "bulb_cap2_row1.Cut004.(null)"</p>
      <p>Sel : Clear selection</p>
      <p>Active view is bulb-cap2-row2 : 1[*] (at 0x339ba40)</p>
      <p>Active view is bulb-cap2-row2 : 1[*] (at 0x339ba40)</p>
      <p>Save AutoRecovery file: Needed time: 78ms</p>
      <p>Active view is bulb-cap2-row2 : 1[*] (at 0x339ba40)</p>
      <p>Active view is bulb-cap2-row2 : 1[*] (at 0x339ba40)</p>
      <p>Active view is bulb-cap2-row2 : 1[*] (at 0x339ba40)</p>
    </div>
    <div class="flex w-4 shrink-0 flex-col justify-between bg-[repeating-conic-gradient(#fff_0_25%,#d4d0c8_0_50%)] bg-[length:2px_2px]">
      <button aria-label="Scroll up" class="grid h-4 place-items-center border border-b-black border-l-white border-r-black border-t-white bg-[#d4d0c8]"><svg class="h-[5px] w-2"><use href="#up"/></svg></button>
      <div>
        <div class="h-[22px] border border-b-black border-l-white border-r-black border-t-white bg-[#d4d0c8]"></div>
        <button aria-label="Scroll down" class="grid h-4 w-full place-items-center border border-b-black border-l-white border-r-black border-t-white bg-[#d4d0c8]"><svg class="h-[5px] w-2"><use href="#dn"/></svg></button>
      </div>
    </div>
  </div>
</section>

<footer class="flex h-[28px] shrink-0 items-center justify-between border-b border-t border-b-black border-t-white">
  <div class="h-6 w-[124px] border border-b-white border-l-[#6b6965] border-r-white border-t-[#6b6965]"></div>
  <div class="flex h-full items-center gap-[6px]">
    <div class="h-6 border border-b-white border-l-[#6b6965] border-r-white border-t-[#6b6965] px-[2px] leading-[22px]">266.97 x 150.78 mm</div>
    <svg class="self-end" width="12" height="12" viewBox="0 0 12 12"><path d="M0 12L12 0M4 12l8-8M8 12l4-4" stroke="#6b6965" stroke-width="2"/><path d="M2 12L12 2M6 12l6-6" stroke="#fff"/></svg>
  </div>
</footer>
<div class="flex h-[3px] shrink-0 justify-between bg-[#e9e6e1]"><div class="w-[21px] border-r border-black bg-[#4d7685]"></div><div class="w-[21px] border-l border-black bg-[#4d7685]"></div></div>

<script>
const face = {
  front: 'M1.5 6.5L14 8.5v14L1.5 19.500z', top: 'M1.5 6.5L8 1.5 21.5 3 14 8.500z', right: 'M14 8.5L21.5 3l-1 14-6.500 5.500z',
  rear: 'M8 1.5L21.5 3l-1 14L8 14.500z', bottom: 'M1.5 19.5L8 14.5 20.5 17 14 22.500z', left: 'M1.5 6.5L8 1.5v13l-6.500 5z', axo: ''
};
const glyph = id => id in face
  ? `<svg class="size-6" viewBox="0 0 24 24"><use href="#cubebg"/><path d="${face[id]}" fill="url(#gT)"/><use href="#cube"/></svg>`
  : `<svg class="size-6"><use href="#${id}"/></svg>`;
const btn = ([id, label]) => `<button class="grid w-[31px] shrink-0 place-items-center" title="${label}" aria-label="${label}">${glyph(id)}</button>`;
const sep = '<div class="flex w-[6px] shrink-0 justify-center py-1"><div class="w-[2px] border-l border-r border-l-[#6b6965] border-r-white"></div></div>';
const arrow = '<button class="grid w-3 shrink-0 place-items-center" aria-label="More"><svg class="h-[6px] w-[10px]"><use href="#dn"/></svg></button>';
const arrowOff = '<button disabled class="grid w-3 shrink-0 place-items-center" aria-label="More"><svg class="h-[6px] w-[10px] fill-[#a3a19b]"><use href="#dn"/></svg></button>';
const combo = `<label class="relative my-1 flex w-[178px] items-center border-b border-l-2 border-r border-t-2 border-b-white border-l-black border-r-white border-t-black bg-white">
  <svg class="absolute left-[5px] size-[13px]"><use href="#part"/></svg>
  <select aria-label="Workbench" class="w-full appearance-none bg-transparent pl-[22px] leading-4 outline-none"><option>Part</option></select>
  <span class="pointer-events-none absolute inset-y-0 right-0 grid w-4 place-items-center border border-b-black border-l-white border-r-black border-t-white bg-[#d4d0c8]"><svg class="h-[5px] w-2"><use href="#dn"/></svg></span></label>`;
const bar = (items, cls) => `<div role="toolbar" class="flex border border-b-[#6b6965] border-l-white border-r-[#6b6965] border-t-white ${cls}">
  <div class="flex w-[11px] shrink-0 py-[3px] pl-[2px]"><i class="w-[3px] border-l-2 border-r border-l-white border-r-[#6b6965]"></i><i class="w-[3px] border-l-2 border-r border-l-white border-r-[#6b6965]"></i></div>
  ${items.map(i => Array.isArray(i) ? btn(i) : i).join('')}</div>`;
row1.innerHTML =
  bar([['new','New'],['open','Open'],['save','Save'],['print','Print'],sep,['cut','Cut'],['copy','Copy'],['paste','Paste'],sep,['undo','Undo'],arrow,['redo','Redo'],arrowOff,sep,['refresh','Refresh'],sep,["help","What's this?"]], 'pr-px') +
  bar([combo], 'pr-px') +
  bar([['rec','Record macro'],['stop','Stop'],['edit','Macros'],['play','Execute']], 'flex-1 border-r-transparent');
row2.innerHTML = bar([['fit','Fit all'],['fitsel','Fit selection'],['nodraw','Draw style'],arrow,sep,['axo','Axonometric'],sep,['front','Front'],['top','Top'],['right','Right'],sep,['rear','Rear'],['bottom','Bottom'],['left','Left'],sep,['ruler','Measure distance']], 'flex-1');
row3.innerHTML =
  bar([['box','Box'],['cyl','Cylinder'],['sph','Sphere'],['cone','Cone'],['torus','Torus'],['prim','Primitives'],['shapeb','Shape builder']], '') +
  bar([['extr','Extrude'],['rev','Revolve'],['mirror','Mirror'],['fillet','Fillet'],['chamf','Chamfer'],['ruled','Ruled surface'],['loft','Loft'],['sweep','Sweep'],['offs','Offset'],['thick','Thickness']], 'pr-px') +
  bar([['bool','Boolean'],['bcut','Cut'],['fus','Union'],['inter','Intersection'],['tee','Join'],arrow,['check','Check geometry'],['defeat','Section'],['sect','Cross-sections']], 'pr-px') +
  bar([['tape','Measure linear'],['tang','Measure angular'],sep,['tclr','Clear all'],['tall','Toggle all'],['t3d','Toggle 3D'],['tdel','Toggle delta']], 'flex-1 border-r-transparent');

// Tree cells: _ blank, v line, t tee, l elbow, m/n open node (n = last), p/q closed node (q = last)
const up = 'M10.5 0V8', dn = 'M10.5 8V16', rt = 'M10 8.5H20';
const cell = c => {
  const lines = { _: '', v: up + dn, t: up + dn + rt, l: up + rt, m: up + dn + rt, n: up + rt, p: up + dn + rt, q: up + rt }[c];
  const node = 'mnpq'.includes(c);
  const box = node ? `<rect x="6.500" y="4.500" width="8" height="8" fill="#fff" stroke="#6b6965"/><path d="M8 8.500h5${'pq'.includes(c) ? 'M10.5 6v5' : ''}" stroke="#000"/>` : '';
  const svg = `<svg class="h-4 w-5 shrink-0" viewBox="0 0 20 16"><path d="${lines}" stroke="#555" stroke-dasharray="1 1" shape-rendering="crispEdges"/>${box}</svg>`;
  return node ? `<button class="shrink-0" aria-label="Toggle">${svg}</button>` : svg;
};
const off = 'text-[#706f6b]', on = 'text-black', bold = 'font-bold text-black';
tree.innerHTML = [
  ['n','doc','bulb-cap2-row2',bold], ['_m','bcut','Cut',off], ['_vm','pad','Outer shell',off], ['_vvl','sketch','Sketch',off],
  ['_vn','pad','Inner shell',off], ['_v_l','sketch','Sketch001',off], ['_t','part','Cut003_Solid',on], ['_m','fusb','Fusion_row3',on],
  ['_vt','ball','row3_h5',off], ['_vt','ball','row3_h6',off], ['_vt','ball','row3_h2',off], ['_vt','ball','row3_h3',off], ['_vl','ball','row3_h4',off],
  ['_n','bcutb','Cut004','font-bold text-black w-[122px] outline-1 outline-dotted outline-black -outline-offset-1'],
  ['__m','bcut','Cut003',off], ['__vp','bcut','Cut002',off], ['__vq','fus','Fusion_row2',off], ['__l','ball','row3_h1',off]
].map(([cells, icon, text, cls]) => `<div role="treeitem" class="flex h-4 items-center">${[...cells].map(cell).join('')}<span class="grid w-[22px] shrink-0 place-items-center"><svg class="${icon === 'part' ? 'size-[13px]' : 'size-4'}"><use href="#${icon}"/></svg></span><span class="whitespace-nowrap px-[3px] ${cls}">${text}</span></div>`).join('');
</script>
</body>
</html>
